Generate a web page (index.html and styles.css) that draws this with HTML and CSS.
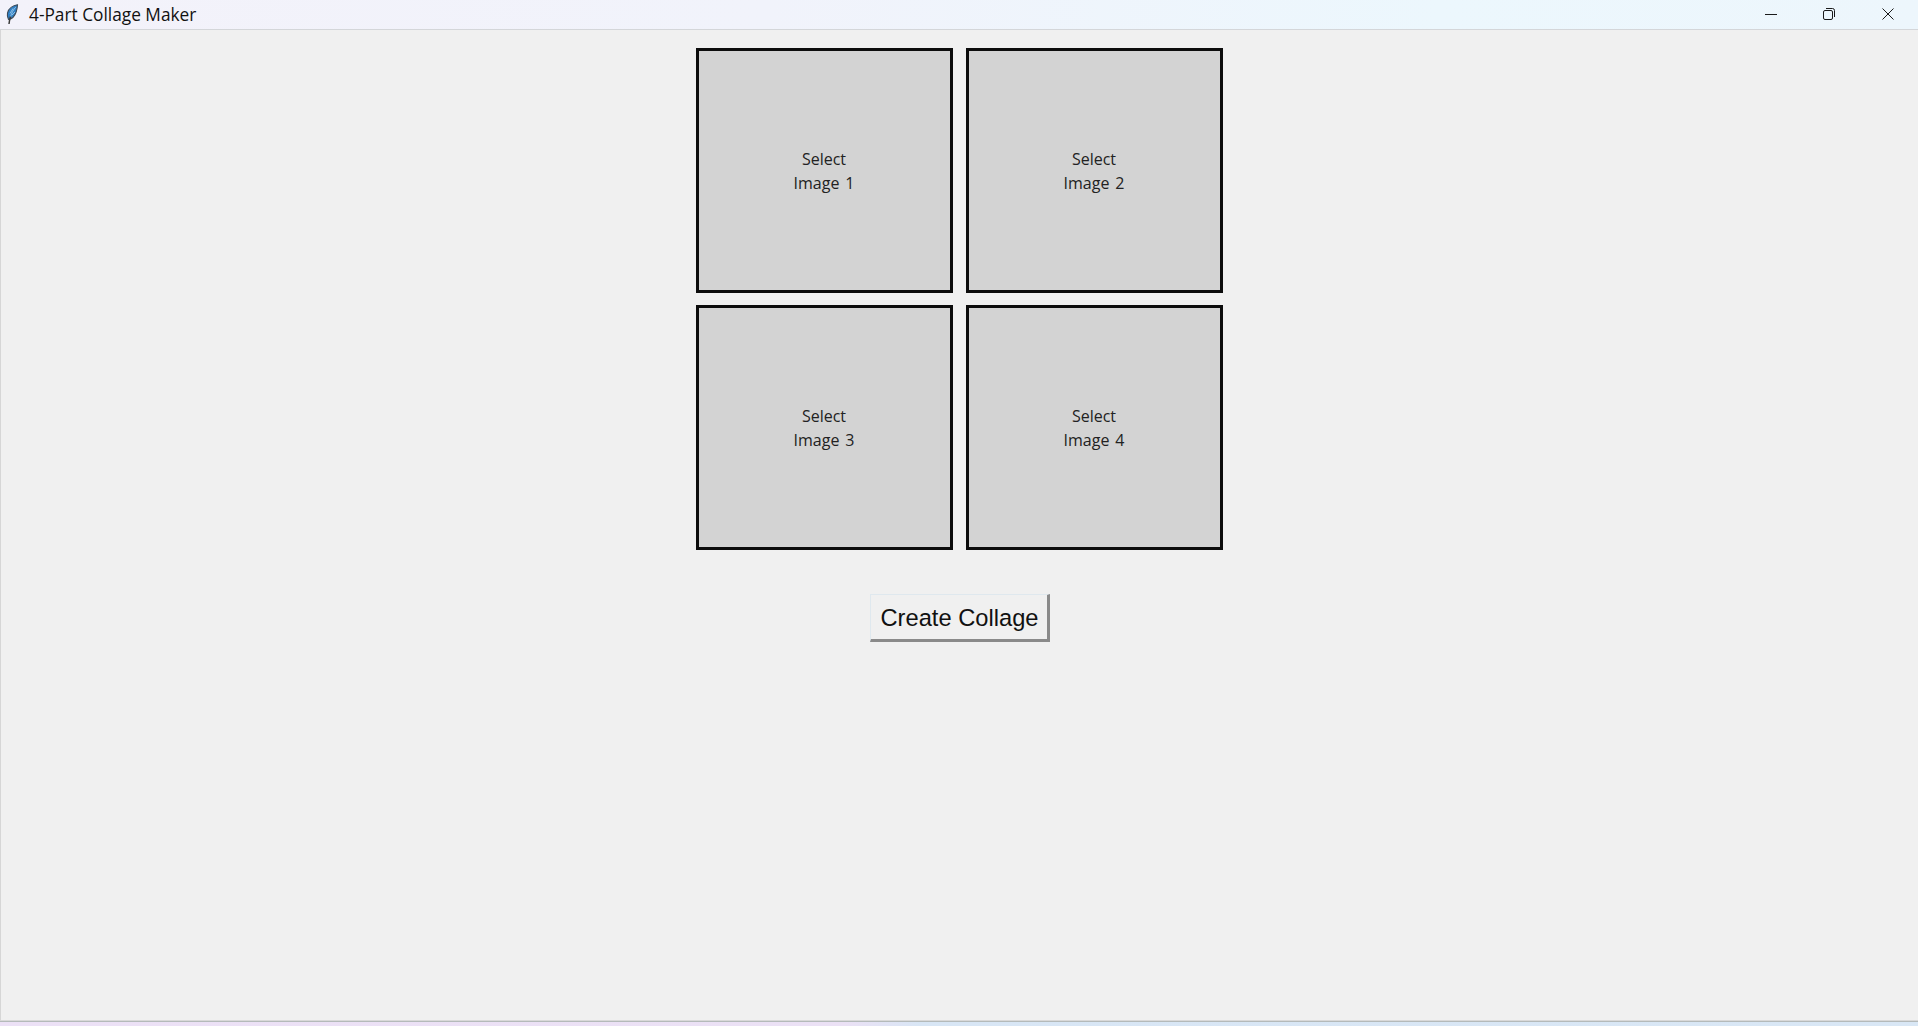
FILE: index.html
```html
<!DOCTYPE html>
<html lang="en">
<head>
<meta charset="utf-8">
<title>4-Part Collage Maker</title>
<link rel="stylesheet" href="styles.css">
</head>
<body>
<div class="window">
  <header class="titlebar">
    <div class="title-left">
      <svg class="feather" viewBox="0 0 14 22" width="14" height="22" aria-hidden="true">
        <path d="M12.500.8C8 1.500 3.500 4.500 2.500 9c-.5 2.500 0 4.500 1 6.500 3.500-.5 6.500-4 7.800-8 .7-2.500 1.100-4.500 1.200-6.700z" fill="#2f7fc4" stroke="#3c4a58" stroke-width="1.100"/>
        <path d="M10.800 3C8.500 5.500 6.500 9 5.500 13M8 4.500 5 9.500M10 8 7 11" fill="none" stroke="#a5d0ee" stroke-width=".8"/>
        <path d="M5.500 12.500C4.800 15 4.200 17.500 4 20" fill="none" stroke="#3a3a3a" stroke-width="1.500"/>
      </svg>
      <span class="title-text">4-Part Collage Maker</span>
    </div>
    <div class="controls">
      <span class="ctl">
        <svg viewBox="0 0 12 12" width="12" height="12"><path d="M0 6.500h12" stroke="#1a1a1a" fill="none"/></svg>
      </span>
      <span class="ctl">
        <svg viewBox="0 0 12 12" width="12" height="12"><rect x=".5" y="2.500" width="9" height="9" rx="1.500" fill="none" stroke="#1a1a1a"/><path d="M3 .5h6.500a2 2 0 0 1 2 2V9" fill="none" stroke="#1a1a1a"/></svg>
      </span>
      <span class="ctl">
        <svg viewBox="0 0 12 12" width="12" height="12"><path d="M.5.5l11 11M11.500.5l-11 11" stroke="#1a1a1a" fill="none"/></svg>
      </span>
    </div>
  </header>
  <main class="content">
    <section class="grid">
      <div class="cell">Select<br>Image 1</div>
      <div class="cell">Select<br>Image 2</div>
      <div class="cell">Select<br>Image 3</div>
      <div class="cell">Select<br>Image 4</div>
    </section>
    <button class="create" type="button">Create Collage</button>
  </main>
  <footer class="edge"></footer>
</div>
</body>
</html>
```
FILE: styles.css
```css
html, body {
  margin: 0;
  padding: 0;
  height: 100%;
  overflow: hidden;
}
.window {
  width: 1918px;
  height: 1026px;
  display: flex;
  flex-direction: column;
  background: #f0f0f0;
  font-family: "Open Sans", "Noto Sans", sans-serif;
}
.titlebar {
  height: 29px;
  flex: none;
  display: flex;
  justify-content: space-between;
  align-items: center;
  background: linear-gradient(90deg, #f3f2fa 0%, #f1f3fb 40%, #ecf7fd 75%, #edf6fc 100%);
  border-bottom: 1px solid #d4d6d9;
}
.title-left {
  display: flex;
  align-items: center;
  padding-left: 5px;
}
.feather {
  display: block;
}
.title-text {
  margin-left: 10px;
  margin-top: -1px;
  font-size: 17.300px;
  color: #111;
  white-space: nowrap;
}
.controls {
  display: flex;
  margin-top: -2px;
  padding-right: 1px;
}
.ctl {
  width: 58.600px;
  height: 29px;
  display: flex;
  align-items: center;
  justify-content: center;
}
.content {
  flex: 1;
  display: flex;
  flex-direction: column;
  align-items: center;
  border-left: 1px solid #d6d6d6;
  border-bottom: 1px solid #d9d9d9;
  padding-top: 18px;
  box-sizing: border-box;
}
.grid {
  display: grid;
  grid-template-columns: 257px 257px;
  grid-template-rows: 245px 245px;
  gap: 12px 13px;
  margin-left: -1px;
}
.cell {
  box-sizing: border-box;
  border: 3px solid #0c0c0c;
  background: #d3d3d3;
  display: flex;
  align-items: center;
  justify-content: center;
  text-align: center;
  font-size: 16px;
  word-spacing: 1.800px;
  line-height: 24px;
  color: #222;
}
.create {
  margin-top: 44px;
  margin-left: 1px;
  width: 180px;
  height: 48px;
  padding: 2px 0 0 1px;
  box-sizing: border-box;
  background: #f0f0f0;
  border: 1px solid #dfe8ee;
  border-right: 3px solid #8a8a8a;
  border-bottom: 3px solid #8a8a8a;
  font-family: "Liberation Sans", Arial, sans-serif;
  font-size: 23.700px;
  color: #111;
}
.edge {
  height: 5px;
  flex: none;
  border-top: 1px solid #b4baba;
  box-sizing: border-box;
  background: linear-gradient(90deg, #ece1f6 0%, #ebe1f5 44%, #d8e6f5 48%, #d9e7f5 100%);
}
```
